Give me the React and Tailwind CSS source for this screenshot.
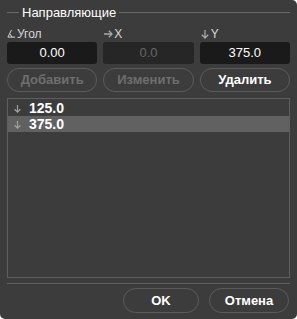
import { useState } from 'react';

const FONT = { fontFamily: '"Liberation Sans", Arial, sans-serif' };

function ArrowDown({ className = '' }) {
  return (
    <svg viewBox="0 0 10 10" className={className} fill="none" stroke="currentColor" strokeWidth="1.3">
      <path d="M5 1v8M1.8 5.8 5 9l3.2-3.2" />
    </svg>
  );
}

function ArrowRight({ className = '' }) {
  return (
    <svg viewBox="0 0 10 10" className={className} fill="none" stroke="currentColor" strokeWidth="1.3">
      <path d="M1 5h8M5.8 1.8 9 5 5.8 8.2" />
    </svg>
  );
}

function AngleIcon({ className = '' }) {
  return (
    <svg viewBox="0 0 10 10" className={className} fill="none" stroke="currentColor" strokeWidth="1.1">
      <path d="M5 1 1 9h8M3.4 5.6 5.6 9" />
    </svg>
  );
}

function Pill({ children, disabled, className = '' }) {
  return (
    <button
      type="button"
      className={`h-[24px] rounded-full border border-[#5b5b5b] text-[13px] font-bold ${
        disabled ? 'text-[#6e6e6e]' : 'text-white'
      } ${className}`}
    >
      {children}
    </button>
  );
}

export default function App() {
  const [selected, setSelected] = useState(1);
  const guides = ['125.0', '375.0'];

  return (
    <div className="w-[297px] h-[319px] bg-white" style={FONT}>
      <div className="w-full h-full bg-[#3c3c3c] rounded-tr-[5px] rounded-bl-[5px] rounded-br-[5px] px-[7px] flex flex-col">
        {/* Title */}
        <div className="flex items-center gap-[3px] h-[24px] pt-[1px]">
          <div className="w-[12px] h-px bg-[#6a6a6a]" />
          <span className="text-[13px] text-white leading-none">Направляющие</span>
          <div className="flex-1 h-px bg-[#6a6a6a]" />
        </div>

        {/* Labels + inputs */}
        <div className="grid grid-cols-3 gap-x-[6px]">
          <div className="flex items-center gap-[1px] h-[18px] pt-[1px] text-[12px] text-[#d8d8d8]">
            <AngleIcon className="w-[9px] h-[9px]" />
            <span>Угол</span>
          </div>
          <div className="flex items-center gap-[1px] h-[18px] pt-[1px] text-[12px] text-[#d8d8d8]">
            <ArrowRight className="w-[10px] h-[10px] text-[#a8a8a8]" />
            <span>X</span>
          </div>
          <div className="flex items-center gap-[1px] h-[18px] pt-[1px] text-[12px] text-[#d8d8d8]">
            <ArrowDown className="w-[10px] h-[10px] text-[#a8a8a8]" />
            <span>Y</span>
          </div>
          <div className="h-[22px] rounded-[3px] bg-[#1a1a1a] flex items-center justify-center text-[13px] text-white">0.00</div>
          <div className="h-[22px] rounded-[3px] bg-[#262626] flex items-center justify-center text-[13px] text-[#666]">0.0</div>
          <div className="h-[22px] rounded-[3px] bg-[#1a1a1a] flex items-center justify-center text-[13px] text-white">375.0</div>
        </div>

        {/* Action buttons */}
        <div className="grid grid-cols-3 gap-x-[6px] mt-[4px]">
          <Pill disabled>Добавить</Pill>
          <Pill disabled>Изменить</Pill>
          <Pill>Удалить</Pill>
        </div>

        {/* Guides list */}
        <div className="mt-[6px] h-[180px] border border-[#5e5e5e] pt-[1px]">
          {guides.map((g, i) => (
            <div
              key={g}
              onClick={() => setSelected(i)}
              className={`h-[16px] flex items-center gap-[7px] pl-[5px] text-[14px] font-bold text-white ${
                selected === i ? 'bg-[#616161]' : ''
              }`}
            >
              <ArrowDown className="w-[9px] h-[9px] text-[#a0a0a0]" />
              <span className="leading-none">{g}</span>
            </div>
          ))}
        </div>

        {/* Footer */}
        <div className="mt-[5px] h-px bg-[#5e5e5e]" />
        <div className="flex justify-end gap-[10px] mt-[4px] pr-[1px]">
          <Pill className="w-[76px] h-[25px]">OK</Pill>
          <Pill className="w-[80px] h-[25px]">Отмена</Pill>
        </div>
      </div>
    </div>
  );
}
